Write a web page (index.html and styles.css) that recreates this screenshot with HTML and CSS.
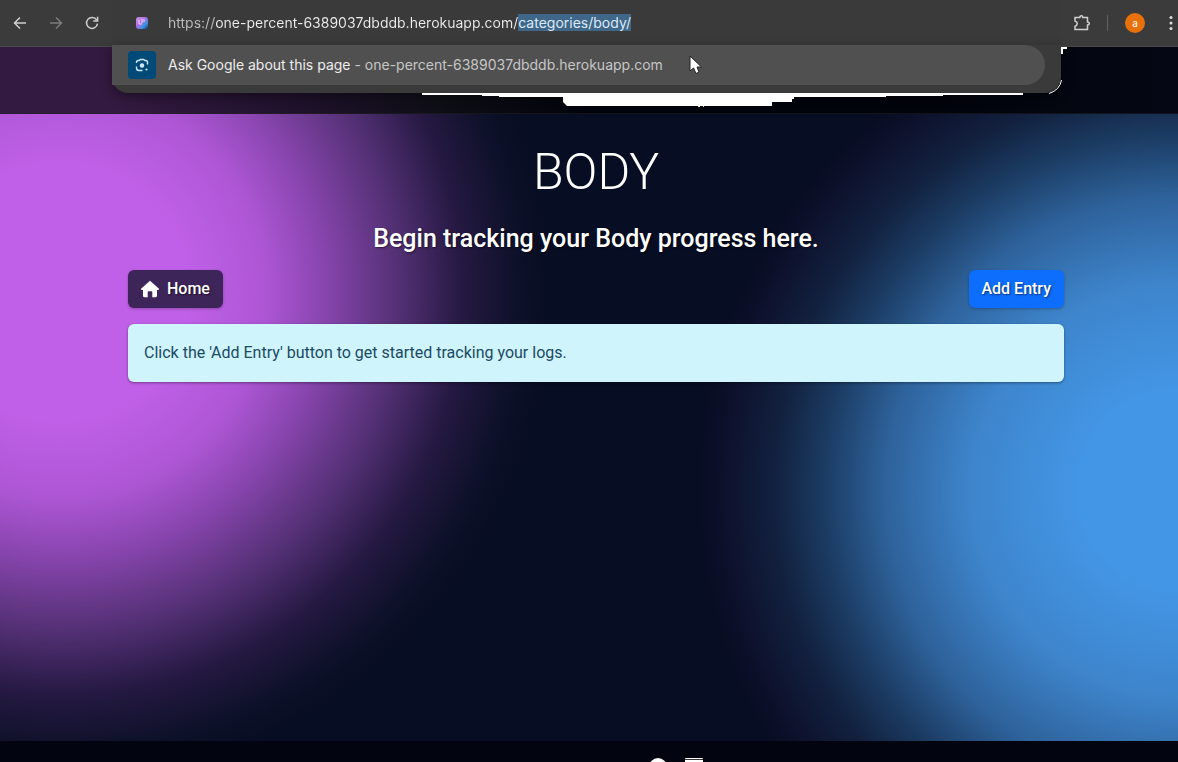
FILE: index.html
```html
<!DOCTYPE html>
<html lang="en">
<head>
<meta charset="utf-8">
<title>Body</title>
<link rel="stylesheet" href="styles.css">
</head>
<body>
<header class="toolbar">
  <nav class="nav-buttons" aria-label="Browser">
    <button class="tool" aria-label="Back"><svg width="16" height="16" viewBox="0 0 16 16"><path d="M14 8H3M8 2.500L2.500 8L8 13.500"/></svg></button>
    <button class="tool dim" aria-label="Forward"><svg width="16" height="16" viewBox="0 0 16 16"><path d="M2 8H13M8 2.500L13.500 8L8 13.500"/></svg></button>
    <button class="tool" aria-label="Reload"><svg width="16" height="16" viewBox="0 0 16 16"><path d="M12.600 4.800A5.500 5.500 0 1 0 13.500 8.600M13.600 1.800V6H9.300"/></svg></button>
  </nav>
  <div class="omnibox">
    <div class="address">
      <svg class="favicon" width="14" height="14" viewBox="0 0 14 14" aria-hidden="true">
        <defs><linearGradient id="fav" x1="0" y1="0" x2="1" y2="1"><stop offset="0" stop-color="#c8a0dc"/><stop offset=".4" stop-color="#b76be8"/><stop offset=".7" stop-color="#3f93e0"/><stop offset="1" stop-color="#143c78"/></linearGradient></defs>
        <rect x="1" y="1" width="12" height="12" rx="3" fill="url(#fav)"/>
        <path d="M4 4V8M4 8H7M7 3V7M9 3V6" stroke="#f4d7ff" fill="none"/>
      </svg>
      <input class="url" id="url" type="text" aria-label="Address" spellcheck="false" value="https://one-percent-6389037dbddb.herokuapp.com/categories/body/">
    </div>
    <div class="dropdown">
      <button class="suggestion">
        <span class="lens"><svg width="14" height="14" viewBox="0 0 14 14" aria-hidden="true"><path d="M1.500 5V4.300Q1.500 2.500 3.300 2.500H4.200L5.300 1.500H8.700L9.800 2.500H10.700Q12.500 2.500 12.500 4.300V6.500M1.500 8.500V10Q1.500 12.500 4 12.500H7.500"/><circle class="dot" cx="7" cy="7.500" r="2.200"/><circle class="dot" cx="11.500" cy="11.500" r="1.100"/></svg></span>
        <span class="suggestion-text">Ask Google about this page <span class="muted">- one-percent-6389037dbddb.herokuapp.com</span></span>
      </button>
    </div>
    <svg class="edge-light" width="955" height="62" viewBox="0 0 955 62" aria-hidden="true">
      <path fill="#fff" d="M310 48H911V50H831V51H774V52H682V54H680V57H660V61H592V62H591V61H588V62H586V61H455L451 57V52H387V51H370V50H310Z"/>
      <path fill="#fff" d="M949 2H955V4H951V9H949Z"/>
      <path fill="none" stroke="#fff" d="M949.500 35Q948 45 937 48.500"/>
    </svg>
  </div>
  <div class="profile">
    <button class="tool" aria-label="Extensions"><svg width="18" height="18" viewBox="0 0 18 18"><path d="M2 3.500H6.800Q6.800 1.800 8.300 1.800T9.800 3.500H14.500V8Q16.300 8 16.300 9.500T14.500 11V15.500H2V12.200Q4.300 11.500 4.300 9.600T2 7Z"/></svg></button>
    <span class="separator"></span>
    <button class="avatar" aria-label="Profile">a</button>
    <button class="tool menu" aria-label="Menu"><svg width="6" height="18" viewBox="0 0 6 18"><circle cx="3" cy="3.500" r="1.500"/><circle cx="3" cy="9" r="1.500"/><circle cx="3" cy="14.500" r="1.500"/></svg></button>
  </div>
</header>
<div class="page">
  <div class="site-bar"></div>
  <main class="content">
    <h1 class="title">BODY</h1>
    <h2 class="subtitle">Begin tracking your Body progress here.</h2>
    <div class="actions">
      <a class="btn btn-home" href="#"><svg width="20" height="18" viewBox="0 0 20 18" aria-hidden="true"><path d="M10 .7L19 8.700Q19.300 10 18 10H17V15.800Q17 17.300 15.500 17.300H12.300V12.300Q12.300 11.300 11.300 11.300H8.700Q7.700 11.300 7.700 12.300V17.300H4.500Q3 17.300 3 15.800V10H2Q.700 10 1 8.700Z" fill="#fff"/></svg>Home</a>
      <a class="btn btn-add" href="#">Add Entry</a>
    </div>
    <div class="alert" role="status">Click the 'Add Entry' button to get started tracking your logs.</div>
  </main>
  <footer class="footer">
    <svg width="18" height="18" viewBox="0 0 18 18" aria-label="GitHub"><circle cx="9" cy="9" r="9" fill="#fff"/></svg>
    <svg width="18" height="18" viewBox="0 0 18 18" aria-label="LinkedIn"><rect width="18" height="18" rx="1" fill="#fff"/><path d="M0 1.500H18" stroke="#333"/></svg>
  </footer>
</div>
<svg class="cursor" width="14" height="20" viewBox="0 0 14 20" aria-hidden="true"><path d="M1 1V16L4.500 13L7 18.500L10 17L8 12H12.500Z" fill="#fff" stroke="#222"/></svg>
<script src="script.js"></script>
</body>
</html>
```
FILE: styles.css
```css
* { box-sizing: border-box; }
body { margin: 0; min-height: 100vh; display: flex; flex-direction: column; overflow: hidden; background: #070d22; color: #fff; font: 16px/24px Roboto, sans-serif; }
button { border: 0; padding: 0; background: none; font: inherit; color: inherit; }

.toolbar { display: flex; height: 47px; background: #3b3b3b; border-bottom: 1px solid #484848; font-family: Inter, sans-serif; position: relative; z-index: 2; }
.nav-buttons { display: flex; align-items: center; gap: 20px; width: 112px; padding-left: 12px; }
.tool { display: flex; }
.tool svg { fill: none; stroke: #d0d0d0; stroke-width: 1.5; }
.dim svg { stroke: #7c7c7c; }
.omnibox { flex: 1; position: relative; background: #3a3a3a; }
.address { display: flex; align-items: center; height: 45px; padding-left: 23px; }
.favicon { margin-right: 19px; }
.url { flex: 1; min-width: 0; height: 20px; border: 0; outline: 0; padding: 0; font: 14px/18px Inter, sans-serif; caret-color: transparent; color: transparent; background: linear-gradient(to right, #bdbdbd 47px, #ededed 47px); -webkit-background-clip: text; background-clip: text; }
.url::selection { background: #3f6789; color: #dceaf6; }
.dropdown { position: absolute; top: 45px; left: 0; right: 0; padding: 0 16px 8px 0; background: #3a3a3a; border-radius: 0 0 16px 16px; box-shadow: 0 4px 12px #0006; }
.suggestion { display: flex; align-items: center; gap: 12px; width: 100%; height: 40px; padding-left: 16px; background: #505050; border-radius: 0 20px 20px 0; font-size: 14px; line-height: 20px; text-align: left; color: #ededed; }
.lens { display: flex; align-items: center; justify-content: center; width: 28px; height: 28px; border-radius: 4px; background: #004a77; }
.lens svg { fill: none; stroke: #d3e8fb; stroke-width: 1.4; }
.lens .dot { fill: #d3e8fb; stroke: none; }
.muted { color: #c6c6c6; }
.edge-light { position: absolute; top: 45px; left: 0; pointer-events: none; }
.profile { display: flex; align-items: center; width: 117px; padding-left: 12px; }
.separator { width: 1px; height: 16px; margin: 0 17px 0 16px; background: #666060; }
.avatar { width: 20px; height: 20px; border-radius: 50%; background: #e8710a; font-size: 10px; line-height: 20px; text-align: center; }
.menu { margin-left: 23px; }
.menu svg { fill: #ddd; stroke: none; }

.page { flex: 1; display: flex; flex-direction: column; background:
  radial-gradient(circle 490px at 60px 245px, #c060e8 0, #c060e8 26%, #ad56d4 42%, #8845ae 54%, #5c347ee6 69%, #2d1c4bcc 82%, #15153180 93%, #07102400 100%),
  radial-gradient(circle 480px at 100% 443px, #4396e6 0, #4396e6 20%, #3e85cc 43%, #2e629b 61%, #1b3b62 74%, #12213f 84%, #0f1330cc 94%, #070d2200 100%),
  #070d22; }
.site-bar { height: 67px; background: linear-gradient(to right, #331a40 0, #331a40 10%, #21122e 24%, #0d0e15 38%, #02040c 50%, #02040c 80%, #050814 100%); border-bottom: 1px solid #2228; }
.content { flex: 1; padding: 32px 114px 0 128px; }
.title { margin: 0 0 24px; font-size: 50px; line-height: 52px; font-weight: 300; text-align: center; }
.subtitle { margin: 0 0 14px; font-size: 25px; line-height: 34px; font-weight: 500; text-align: center; text-shadow: 1px 1px 2px #0008; }
.actions { display: flex; justify-content: space-between; margin-bottom: 16px; }
.btn { display: flex; align-items: center; gap: 7px; height: 38px; padding: 0 13px 0 12px; border-radius: 6px; color: #fff; font-weight: 500; text-decoration: none; text-shadow: 1px 1px 2px #0008; box-shadow: 0 1px 3px #0004; }
.btn-home { background: #3e2559; }
.btn-add { background: #0d6efd; }
.alert { padding: 17px 16px; border-radius: 6px; background: #cff4fc; color: #1b4a63; box-shadow: 0 1px 3px #0006; }
.footer { display: flex; justify-content: center; gap: 18px; height: 21px; padding: 17px 0 0 174px; overflow: hidden; background: #02040f; }
.cursor { position: absolute; z-index: 3; left: 689px; top: 55px; }
```
FILE: script.js
```js
const url = document.getElementById("url");
const start = url.value.indexOf("categories");
url.focus();
url.setSelectionRange(start, url.value.length);
```
